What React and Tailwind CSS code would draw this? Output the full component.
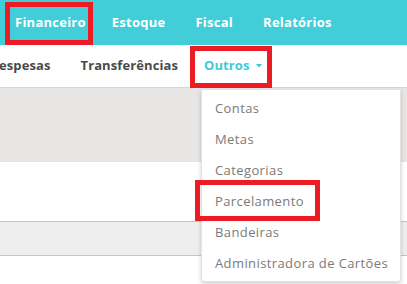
export default function App() {
  const items = ["Contas", "Metas", "Categorias", "Parcelamento", "Bandeiras", "Administradora de Cartões"];
  return (
    <div
      className="relative w-[407px] h-[284px] overflow-hidden bg-white"
      style={{ fontFamily: '"Open Sans", "Liberation Sans", sans-serif' }}
    >
      {/* top bar */}
      <div className="h-[45px] bg-[#41ced9] flex items-center pl-[15px] text-white font-bold text-[13px] tracking-[0.25px]">
        <span>Financeiro</span>
        <span className="ml-[26px]">Estoque</span>
        <span className="ml-[30px]">Fiscal</span>
        <span className="ml-[30px]">Relatórios</span>
      </div>
      {/* sub nav */}
      <div className="h-[43px] flex items-center text-[13px] font-bold text-[#4a4a4a] border-b border-[#d6d6d6] tracking-[0.1px]">
        <span className="ml-[-1px]">espesas</span>
        <span className="ml-[30px]">Transferências</span>
        <span className="ml-[26px] text-[#3fc9d6] flex items-center">
          Outros
          <svg className="ml-[6px]" width="6" height="4" viewBox="0 0 6 4">
            <path d="M0 0 L6 0 L3 3.5 Z" fill="#3fc9d6" />
          </svg>
        </span>
      </div>
      {/* content rows */}
      <div className="h-[74px] bg-[#e7e6e4]" />
      <div className="h-[60px] bg-white border-b border-[#c4c4c4]" />
      <div className="h-[34px] bg-[#eeeeee] border-b border-[#c4c4c4]" />

      {/* active indicator */}
      <div className="absolute left-[28px] top-[44px] w-[42px] h-[2px] bg-white" />

      {/* dropdown */}
      <div className="absolute left-[201px] top-[89px] w-[200px] h-[193px] bg-white border border-[#e2e2e2] rounded-b-[3px] shadow-[0_2px_4px_rgba(0,0,0,0.18)] pt-[3px]">
        {items.map((t) => (
          <div key={t} className="h-[31px] flex items-center pl-[13px] text-[13px] text-[#7a7a7a] tracking-[0.4px]">
            {t}
          </div>
        ))}
      </div>

      {/* red highlight boxes */}
      <div className="absolute left-[5px] top-[2px] w-[88px] h-[43px] border-[5px] border-[#ed1c24]" />
      <div className="absolute left-[190px] top-[46px] w-[82px] h-[42px] border-[5px] border-[#ed1c24]" />
      <div className="absolute left-[195px] top-[180px] w-[125px] h-[41px] border-[5px] border-[#ed1c24]" />
    </div>
  );
}
